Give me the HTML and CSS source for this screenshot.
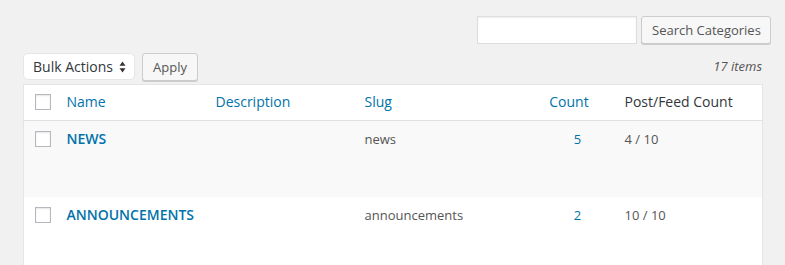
FILE: index.html
```html
<!DOCTYPE html>
<html>
<head>
<meta charset="utf-8">
<link rel="stylesheet" href="styles.css">
</head>
<body>
<div class="wrap">
  <div class="search-box">
    <input class="search-input" type="text">
    <button class="button search-btn">Search Categories</button>
  </div>
  <div class="tablenav">
    <div class="bulk">
      <div class="select">
        <span>Bulk Actions</span>
        <svg class="arrows" width="7" height="12" viewBox="0 0 7 12"><path d="M3.5 0.5 L6.5 4.8 H0.5 Z M3.5 11.5 L6.5 7.2 H0.5 Z" fill="#333"/></svg>
      </div>
      <button class="button apply">Apply</button>
    </div>
    <div class="count-items">17 items</div>
  </div>
  <table class="list">
    <colgroup>
      <col class="c-cb"><col class="c-name"><col class="c-desc"><col class="c-slug"><col class="c-count"><col class="c-feed">
    </colgroup>
    <thead>
      <tr>
        <th class="cb"><span class="checkbox"></span></th>
        <th><a class="link">Name</a></th>
        <th><a class="link">Description</a></th>
        <th><a class="link">Slug</a></th>
        <th class="num"><a class="link sortable">Count</a></th>
        <th class="plain">Post/Feed Count</th>
      </tr>
    </thead>
    <tbody>
      <tr class="alt">
        <td class="cb"><span class="checkbox"></span></td>
        <td><a class="row-title">NEWS</a></td>
        <td></td>
        <td class="slug">news</td>
        <td class="num"><a class="link">5</a></td>
        <td class="slug">4 / 10</td>
      </tr>
      <tr>
        <td class="cb"><span class="checkbox"></span></td>
        <td><a class="row-title">ANNOUNCEMENTS</a></td>
        <td></td>
        <td class="slug">announcements</td>
        <td class="num"><a class="link">2</a></td>
        <td class="slug">10 / 10</td>
      </tr>
    </tbody>
  </table>
</div>
</body>
</html>
```
FILE: styles.css
```css
html, body {
  margin: 0;
  padding: 0;
  background: #f1f1f1;
  font-family: "Open Sans", "Noto Sans", sans-serif;
  color: #444;
  overflow: hidden;
}
.wrap {
  padding: 0 22px 0 23px;
}
.search-box {
  display: flex;
  justify-content: flex-end;
  gap: 4px;
  padding-top: 16px;
  margin-right: -8px;
}
.search-input {
  box-sizing: border-box;
  width: 160px;
  height: 28px;
  margin: 0;
  border: 1px solid #ddd;
  background: #fff;
  box-shadow: inset 0 1px 2px rgba(0,0,0,.07);
  outline: none;
}
.button {
  box-sizing: border-box;
  height: 28px;
  margin: 0;
  padding: 0 10px 1px;
  border: 1px solid #ccc;
  border-radius: 3px;
  background: #f7f7f7;
  box-shadow: 0 1px 0 #ccc;
  color: #555;
  font-family: "Open Sans", "Noto Sans", sans-serif;
  font-size: 13px;
  line-height: 26px;
  white-space: nowrap;
}
.search-btn { width: 130px; }
.tablenav {
  display: flex;
  justify-content: space-between;
  align-items: flex-start;
  margin-top: 9px;
  height: 31px;
}
.bulk {
  display: flex;
  gap: 7px;
}
.select {
  box-sizing: border-box;
  width: 112px;
  height: 27px;
  display: flex;
  align-items: center;
  justify-content: space-between;
  padding: 0 8px 0 9px;
  background: #fff;
  border: 1px solid #e6e6e6;
  border-radius: 5px;
  color: #32373c;
  font-size: 14px;
}
.arrows { display: block; }
.apply { width: 56px; }
.count-items {
  font-size: 13px;
  font-style: italic;
  color: #555;
  line-height: 18px;
  padding-top: 4px;
  margin-right: 1px;
}
.list {
  width: 100%;
  table-layout: fixed;
  border-collapse: collapse;
  background: #fff;
  border: 1px solid #e5e5e5;
  box-shadow: 0 1px 1px rgba(0,0,0,.04);
}
.c-cb { width: 33px; }
.c-name { width: 149px; }
.c-desc { width: 149px; }
.c-slug { width: 184px; }
.c-count { width: 76px; }
.c-feed { width: auto; }
th, td {
  text-align: left;
  vertical-align: top;
  padding: 7px 10px 8px;
  font-size: 14px;
  line-height: 20px;
  font-weight: normal;
}
thead th {
  border-bottom: 1px solid #e1e1e1;
  height: 20px;
}
th.cb, td.cb {
  padding: 9px 0 0 11px;
}
td.cb { padding-top: 10px; }
.checkbox {
  display: block;
  box-sizing: border-box;
  width: 16px;
  height: 16px;
  border: 1px solid #b4b9be;
  background: #fff;
  box-shadow: inset 0 1px 2px rgba(0,0,0,.1);
}
.link { color: #0073aa; }
th.num, td.num { text-align: center; padding-left: 2px; padding-right: 0; }
.sortable { display: inline-block; padding-right: 17px; }
th.plain { color: #32373c; }
tbody tr { height: 76px; }
tbody tr.alt { background: #f9f9f9; }
tbody td { padding-top: 8px; }
.row-title {
  color: #0073aa;
  font-weight: 600;
  font-size: 14px;
}
td.slug { color: #555; font-size: 13px; }
td.num { font-size: 13px; }
```
